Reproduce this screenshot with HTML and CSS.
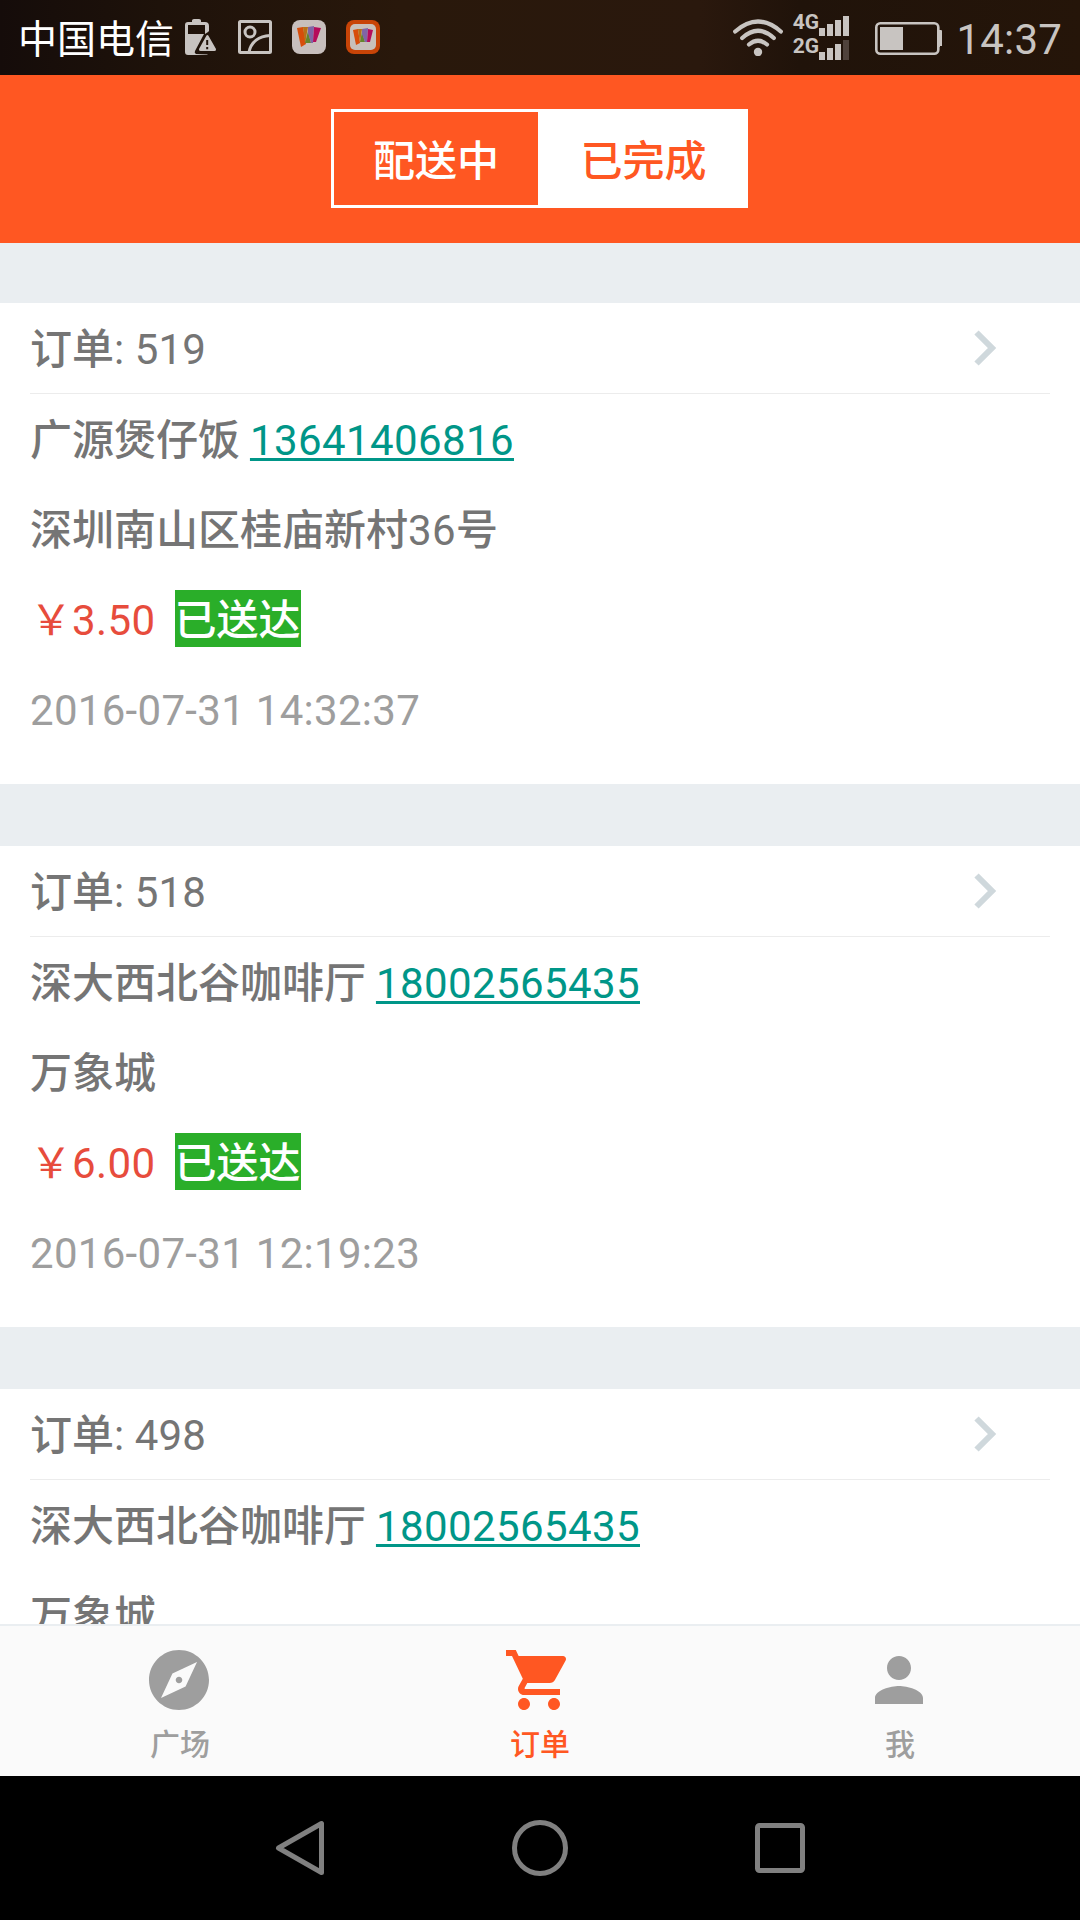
FILE: index.html
```html
<!DOCTYPE html>
<html lang="zh-CN">
<head>
<meta charset="utf-8">
<title>订单</title>
<link rel="stylesheet" href="styles.css">
</head>
<body>
<div class="screen">
  <div class="statusbar">
    <span class="carrier">中国电信</span>
    <div class="notices">
      <svg width="34" height="36" viewBox="0 0 34 36">
        <path fill="#c8c4c1" fill-rule="evenodd" d="M8 3V1.500Q8 0 10 0h5q2 0 2 1.500V3h4q4 0 4 4v5l-1 1-3 2V6H4v9h16L11 32q-1 2 1 3l12 .5-1 .5H4q-3 0-3-3V6q0-3 3-3z"/>
        <path fill="#c8c4c1" fill-rule="evenodd" d="M22.500 16.500q.9-1.200 1.800 0L32 30q.5 1.800-1.500 2H16.500q-2-.2-1.500-2zM22.200 21v5h2v-5zm0 7v2.200h2V28z"/>
      </svg>
      <svg width="34" height="34" viewBox="0 0 34 34" fill="none" stroke="#c8c4c1" stroke-width="3">
        <rect x="1.500" y="1.500" width="31" height="31" rx="1"/>
        <circle cx="12" cy="12" r="5"/>
        <path d="M11 32C13 22 21 16 32 15.500"/>
      </svg>
      <svg width="34" height="34" viewBox="0 0 34 34">
        <rect width="34" height="34" rx="8" fill="#c8bfbd"/>
        <path fill="#d74d0b" d="M5 8l6-1 3 17-5 3z"/><path fill="#b87018" d="M11 7l5 0-3 17z"/><path fill="#65852d" d="M16 11l3 12h-6z"/><path fill="#8065a6" d="M16 7l6-1-1 17-2 0-3-10z"/><path fill="#b50c5b" d="M22 7l7 1-5 14-3 0z"/>
      </svg>
      <svg width="34" height="34" viewBox="0 0 34 34">
        <rect width="34" height="34" rx="8" fill="#c84407"/><rect x="4" y="4" width="26" height="26" rx="5" fill="#c8c0ba"/>
        <path fill="#d74d0b" d="M7 10l5-1 2 14-4 2z"/><path fill="#b87018" d="M12 9l4 0-2 14z"/><path fill="#65852d" d="M16 12l3 10h-5z"/><path fill="#8065a6" d="M16 9l6-1-1 14-2 0-3-8z"/><path fill="#b50c5b" d="M22 9l5 1-3 12-3 0z"/>
      </svg>
    </div>
    <div class="system">
      <svg class="wifi" width="50" height="37" viewBox="0 0 50 37" fill="none" stroke="#c8c4c1" stroke-width="4.200" stroke-linecap="round">
        <path d="M2.200 12.500Q25-7.500 47.800 12.500M9.200 19Q25 4.500 40.800 19M16 25.500q9-7.500 18 0"/>
        <circle cx="25" cy="33" r="4.200" fill="#c8c4c1" stroke="none"/>
      </svg>
      <div class="networks"><span>4G</span><span>2G</span></div>
      <svg class="bars" width="30" height="44" viewBox="0 0 30 44" fill="#c8c4c1">
        <path d="M0 12h6v8H0zM8 8h6v12H8zM16 4h6v16h-6zM24 0h6v20h-6zM0 36h6v8H0zM8 32h6v12H8zM16 28h6v16h-6z"/>
        <path fill="#4f423b" d="M24 24h6v20h-6z"/>
      </svg>
      <svg class="battery" width="67" height="33" viewBox="0 0 67 33">
        <rect x="1.300" y="1.300" width="62" height="30.400" rx="4" fill="none" stroke="#c8c4c1" stroke-width="2.600"/>
        <path fill="#c8c4c1" d="M5 5h23v23H5zM63 8h3q1 0 1 1v15h-2v1h-2z"/>
      </svg>
      <span class="clock">14:37</span>
    </div>
  </div>

  <header class="header">
    <div class="segments">
      <div class="segment">配送中</div>
      <div class="segment segment-on">已完成</div>
    </div>
  </header>

  <main class="orders">
    <section class="order">
      <div class="order-head"><span>订单<span class="num">: 519</span></span>
        <svg width="24" height="38" viewBox="0 0 24 38"><path d="M3.500 3.500L19 19 3.500 34.500" fill="none" stroke="#cfd8dc" stroke-width="6"/></svg></div>
      <div class="row">广源煲仔饭<span class="space"> </span><a class="phone num">13641406816</a></div>
      <div class="row">深圳南山区桂庙新村<span class="num">36</span>号</div>
      <div class="row"><span class="price">￥<span class="num">3.50</span></span><span class="badge">已送达</span></div>
      <div class="row num time">2016-07-31 14:32:37</div>
    </section>
    <section class="order">
      <div class="order-head"><span>订单<span class="num">: 518</span></span>
        <svg width="24" height="38" viewBox="0 0 24 38"><path d="M3.500 3.500L19 19 3.500 34.500" fill="none" stroke="#cfd8dc" stroke-width="6"/></svg></div>
      <div class="row">深大西北谷咖啡厅<span class="space"> </span><a class="phone num">18002565435</a></div>
      <div class="row">万象城</div>
      <div class="row"><span class="price">￥<span class="num">6.00</span></span><span class="badge">已送达</span></div>
      <div class="row num time">2016-07-31 12:19:23</div>
    </section>
    <section class="order">
      <div class="order-head"><span>订单<span class="num">: 498</span></span>
        <svg width="24" height="38" viewBox="0 0 24 38"><path d="M3.500 3.500L19 19 3.500 34.500" fill="none" stroke="#cfd8dc" stroke-width="6"/></svg></div>
      <div class="row">深大西北谷咖啡厅<span class="space"> </span><a class="phone num">18002565435</a></div>
      <div class="row">万象城</div>
    </section>
  </main>

  <nav class="tabs">
    <div class="tab">
      <svg width="72" height="72" viewBox="0 0 24 24" fill="currentColor"><path d="M12 10.900c-.61 0-1.100.49-1.100 1.100s.49 1.100 1.100 1.100c.61 0 1.100-.49 1.100-1.100s-.49-1.100-1.100-1.100zM12 2C6.480 2 2 6.480 2 12s4.480 10 10 10 10-4.480 10-10S17.520 2 12 2zm2.190 12.190L6 18l3.810-8.190L18 6l-3.810 8.190z"/></svg>
      <span>广场</span>
    </div>
    <div class="tab tab-on">
      <svg width="72" height="72" viewBox="0 0 24 24" fill="currentColor"><path d="M7 18c-1.100 0-1.990.9-1.990 2S5.900 22 7 22s2-.9 2-2-.9-2-2-2zM1 2v2h2l3.600 7.590-1.350 2.450c-.16.280-.25.610-.25.960 0 1.100.9 2 2 2h12v-2H7.420c-.14 0-.25-.11-.25-.25l.03-.12.900-1.630h7.450c.75 0 1.410-.41 1.750-1.030l3.580-6.490c.08-.14.120-.31.120-.48 0-.55-.45-1-1-1H5.210l-.94-2H1zm16 16c-1.100 0-1.990.9-1.990 2s.89 2 1.990 2 2-.9 2-2-.9-2-2-2z"/></svg>
      <span>订单</span>
    </div>
    <div class="tab">
      <svg width="72" height="72" viewBox="0 0 24 24" fill="currentColor"><path d="M12 12c2.210 0 4-1.790 4-4s-1.790-4-4-4-4 1.790-4 4 1.790 4 4 4zm0 2c-2.670 0-8 1.340-8 4v2h16v-2c0-2.660-5.330-4-8-4z"/></svg>
      <span>我</span>
    </div>
  </nav>

  <div class="navkeys">
    <svg width="52" height="60" viewBox="0 0 52 60"><path d="M48.500 5.500v49L5.500 30z" fill="none" stroke="#808080" stroke-width="5" stroke-linejoin="round"/></svg>
    <svg width="56" height="56" viewBox="0 0 56 56"><circle cx="28" cy="28" r="25.500" fill="none" stroke="#808080" stroke-width="5"/></svg>
    <svg width="50" height="50" viewBox="0 0 50 50"><rect x="2.500" y="2.500" width="45" height="45" rx="2" fill="none" stroke="#808080" stroke-width="5"/></svg>
  </div>
</div>
</body>
</html>
```
FILE: styles.css
```css
* { box-sizing: border-box; }

body {
  margin: 0;
  font-family: Roboto, "Noto Sans CJK SC", sans-serif;
  font-size: 42px;
  font-weight: 500;
  color: #757575;
}

svg { display: block; flex: none; }

.screen {
  display: flex;
  flex-direction: column;
  width: 1080px;
  height: 1920px;
  overflow: hidden;
  background: #eaeef1;
}

/* system status bar */
.statusbar {
  flex: none;
  display: flex;
  height: 75px;
  padding: 0 18px;
  background: linear-gradient(90deg, #150c0a 0, #1e120a 160px, #29180b 400px, #2a180d 700px, #20130a 800px, #251509 1080px);
  color: #c8c4c1;
  font-weight: 400;
  white-space: nowrap;
}

.carrier {
  width: 166px;
  font-size: 39px;
  line-height: 81px;
  color: #fff;
}

.notices { display: flex; gap: 20px; padding-top: 20px; }
.notices svg:first-child { margin-top: -1px; }

.system { display: flex; margin-left: auto; }
.wifi { margin-top: 19px; }

.networks {
  display: flex;
  flex-direction: column;
  width: 36px;
  padding: 10px 0 0;
  font-size: 21px;
  font-weight: 700;
  line-height: 24px;
  text-align: right;
}

.bars { margin-top: 16px; }
.battery { margin: 22px 0 0 26px; }

.clock {
  width: 120px;
  text-align: right;
  line-height: 80px;
  letter-spacing: .2px;
}

/* orange header with segmented switch */
.header {
  flex: none;
  height: 168px;
  padding: 34px 332px 0 331px;
  background: #ff5722;
}

.segments {
  display: flex;
  height: 99px;
  border: 3px solid #fff;
}

.segment {
  flex: 0 0 204px;
  line-height: 99px;
  text-align: center;
  color: #fff;
}

.segment-on { flex: 1; padding-left: 4px; background: #fff; color: #ff5722; }

/* order cards */
.orders {
  flex: 1;
  min-height: 0;
  overflow: hidden;
  display: flex;
  flex-direction: column;
  gap: 62px;
  padding-top: 60px;
}

.order {
  flex: none;
  height: 481px;
  padding: 0 30px;
  background: #fff;
  white-space: nowrap;
}

.order-head {
  display: flex;
  justify-content: space-between;
  height: 91px;
  padding-right: 53px;
  border-bottom: 1px solid #ececec;
  line-height: 94px;
}

.order-head svg { margin-top: 26px; }
.order-head .num { letter-spacing: .1px; }
.row { height: 90px; line-height: 94px; }
.num { font-weight: 400; letter-spacing: .4px; }
.space { font-weight: 400; letter-spacing: -.5px; }

.phone {
  color: #009688;
  text-decoration: underline;
  text-decoration-thickness: 3px;
  text-underline-offset: 3px;
  text-decoration-skip-ink: none;
}

.price { color: #e74c3c; font-weight: 400; }

.badge {
  display: inline-block;
  height: 57px;
  margin-left: 19px;
  line-height: 61px;
  background: #2aae29;
  color: #fff;
}

.time { color: #9e9e9e; letter-spacing: .3px; }

/* bottom tabs */
.tabs {
  flex: none;
  display: flex;
  height: 152px;
  border-top: 2px solid #eaeef1;
  background: #fafafa;
}

.tab {
  flex: 1;
  display: flex;
  flex-direction: column;
  align-items: center;
  padding-top: 18px;
  font-size: 30px;
  line-height: 57px;
  color: #9e9e9e;
}

.tab svg { margin-right: 2px; }
.tab-on { color: #ff5722; }

/* system navigation keys */
.navkeys {
  flex: none;
  display: flex;
  align-items: center;
  justify-content: space-between;
  height: 144px;
  padding: 0 275px 0 273px;
  background: #000;
}
```
